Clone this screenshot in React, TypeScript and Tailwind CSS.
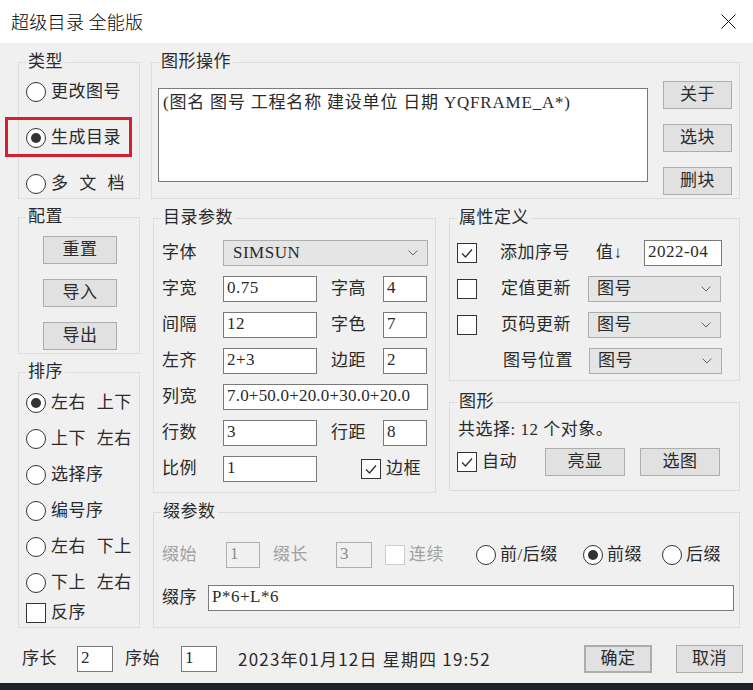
import React from "react";

const Radio = ({ checked = false }: { checked?: boolean }) => (
  <span className="w-[20px] h-[20px] shrink-0 rounded-full border border-[#333] bg-white flex items-center justify-center">
    {checked && <span className="w-[10px] h-[10px] rounded-full bg-[#333]" />}
  </span>
);

const Check = ({ checked = false, disabled = false }: { checked?: boolean; disabled?: boolean }) => (
  <span
    className={`w-[20px] h-[20px] shrink-0 bg-white flex items-center justify-center border ${
      disabled ? "border-[#cccccc]" : "border-[#333]"
    }`}
  >
    {checked && (
      <svg width="14" height="14" viewBox="0 0 14 14">
        <polyline points="2,7.5 5.5,11 12,3.5" fill="none" stroke="#333" strokeWidth="1.4" />
      </svg>
    )}
  </span>
);

const Btn = ({ label, className = "" }: { label: string; className?: string }) => (
  <div
    className={`h-[28px] shrink-0 flex items-center justify-center bg-[#e1e1e1] border border-[#adadad] text-[17px] ${className}`}
  >
    {label}
  </div>
);

const Input = ({ value, className = "" }: { value: string; className?: string }) => (
  <div
    className={`h-[26px] shrink-0 bg-white border border-[#7a7a7a] pl-[3px] text-[17px] leading-[22px] overflow-hidden whitespace-nowrap ${className}`}
  >
    {value}
  </div>
);

const Combo = ({ value, className = "" }: { value: string; className?: string }) => (
  <div
    className={`h-[26px] shrink-0 flex items-center justify-between bg-[#e5e5e5] border border-[#adadad] pl-[8px] pr-[9px] text-[17px] ${className}`}
  >
    <span>{value}</span>
    <svg width="10" height="6" viewBox="0 0 10 6">
      <polyline points="0.5,0.5 5,5 9.5,0.5" fill="none" stroke="#666" strokeWidth="1" />
    </svg>
  </div>
);

const Group = ({ title, className = "", children }: { title: string; className?: string; children: React.ReactNode }) => (
  <fieldset className={`min-w-0 shrink-0 border border-[#dcdcdc] ${className}`}>
    <legend className="ml-[7px] px-[2px] text-[17px] leading-[18px]">{title}</legend>
    {children}
  </fieldset>
);

export default function App() {
  return (
    <div className="w-[753px] h-[690px] flex flex-col bg-[#f0f0f0] text-[#2a2a2a] font-['Liberation_Serif','Noto_Sans_CJK_SC',serif] tracking-[0.5px] overflow-hidden">
      {/* title bar */}
      <div className="h-[43px] shrink-0 bg-white flex items-center justify-between pl-[11px] pr-[17px]">
        <span className="font-['Noto_Sans_CJK_SC',sans-serif] font-light text-[18px] tracking-[0.3px] text-black">
          超级目录 全能版
        </span>
        <svg width="15" height="15" viewBox="0 0 15 15">
          <path d="M0.5 0.5L14.5 14.5M14.5 0.5L0.5 14.5" stroke="#111" strokeWidth="1" />
        </svg>
      </div>

      <div className="flex-1 flex flex-col">
        <div className="flex gap-[11px] pl-[18px] pt-[10px]">
          {/* left column */}
          <div className="w-[122px] flex flex-col gap-[9px]">
            <Group title="类型" className="h-[146px]">
              <div className="flex flex-col gap-[26px] pl-[7px] pt-[11px]">
                <div className="flex items-center gap-[5px] h-[20px]">
                  <Radio />
                  <span className="text-[17px]">更改图号</span>
                </div>
                <div className="relative flex items-center gap-[5px] h-[20px]">
                  <Radio checked />
                  <span className="text-[17px]">生成目录</span>
                  <div className="absolute -left-[21px] -top-[11px] w-[127px] h-[40px] border-[3px] border-[#d3222f]" />
                </div>
                <div className="flex items-center gap-[5px] h-[20px]">
                  <Radio />
                  <span className="text-[17px] [word-spacing:6px]">多 文 档</span>
                </div>
              </div>
            </Group>

            <Group title="配置" className="h-[146px]">
              <div className="flex flex-col gap-[15px] pl-[24px] pt-[10px]">
                <Btn label="重置" className="w-[74px]" />
                <Btn label="导入" className="w-[74px]" />
                <Btn label="导出" className="w-[74px]" />
              </div>
            </Group>

            <Group title="排序" className="h-[265px]">
              <div className="flex flex-col pl-[7px] pt-[12px]">
                <div className="flex flex-col gap-[16px]">
                  {[
                    ["左右 上下", true],
                    ["上下 左右", false],
                    ["选择序", false],
                    ["编号序", false],
                    ["左右 下上", false],
                    ["下上 左右", false],
                  ].map(([t, c]) => (
                    <div key={t as string} className="flex items-center gap-[5px] h-[20px]">
                      <Radio checked={c as boolean} />
                      <span className="text-[17px] [word-spacing:6px]">{t as string}</span>
                    </div>
                  ))}
                </div>
                <div className="flex items-center gap-[5px] h-[20px] mt-[10px]">
                  <Check />
                  <span className="text-[17px]">反序</span>
                </div>
              </div>
            </Group>
          </div>

          {/* right column */}
          <div className="w-[589px] flex flex-col gap-[10px]">
            <Group title="图形操作" className="h-[146px]">
              <div className="flex items-start pl-[6px]">
                <div className="mt-[17px] w-[490px] h-[94px] bg-white border border-[#7a7a7a] pl-[4px] pt-[1px] text-[17px] tracking-[0.8px] whitespace-nowrap">
                  (图名 图号 工程名称 建设单位 日期 YQFRAME_A*)
                </div>
                <div className="ml-[15px] mt-[10px] flex flex-col gap-[15px]">
                  <Btn label="关于" className="w-[69px]" />
                  <Btn label="选块" className="w-[69px]" />
                  <Btn label="删块" className="w-[69px]" />
                </div>
              </div>
            </Group>

            <div className="flex gap-[13px] pl-[2px]">
              <Group title="目录参数" className="w-[283px] h-[284px]">
                <div className="flex flex-col gap-[10px] pl-[8px] pt-[13px] text-[17px]">
                  <div className="flex items-center h-[26px]">
                    <span className="w-[61px]">字体</span>
                    <Combo value="SIMSUN" className="w-[205px] pl-[9px]" />
                  </div>
                  <div className="flex items-center h-[26px]">
                    <span className="w-[61px]">字宽</span>
                    <Input value="0.75" className="w-[94px]" />
                    <span className="ml-[14px] w-[52px]">字高</span>
                    <Input value="4" className="w-[44px]" />
                  </div>
                  <div className="flex items-center h-[26px]">
                    <span className="w-[61px]">间隔</span>
                    <Input value="12" className="w-[94px]" />
                    <span className="ml-[14px] w-[52px]">字色</span>
                    <Input value="7" className="w-[44px]" />
                  </div>
                  <div className="flex items-center h-[26px]">
                    <span className="w-[61px]">左齐</span>
                    <Input value="2+3" className="w-[94px]" />
                    <span className="ml-[14px] w-[52px]">边距</span>
                    <Input value="2" className="w-[44px]" />
                  </div>
                  <div className="flex items-center h-[26px]">
                    <span className="w-[61px]">列宽</span>
                    <Input value="7.0+50.0+20.0+30.0+20.0" className="w-[205px] tracking-[0.2px]" />
                  </div>
                  <div className="flex items-center h-[26px]">
                    <span className="w-[61px]">行数</span>
                    <Input value="3" className="w-[94px]" />
                    <span className="ml-[14px] w-[52px]">行距</span>
                    <Input value="8" className="w-[44px]" />
                  </div>
                  <div className="flex items-center h-[26px]">
                    <span className="w-[61px]">比例</span>
                    <Input value="1" className="w-[94px]" />
                    <span className="ml-[44px]">
                      <Check checked />
                    </span>
                    <span className="ml-[5px]">边框</span>
                  </div>
                </div>
              </Group>

              <div className="w-[291px] flex flex-col gap-[12px]">
                <Group title="属性定义" className="h-[172px]">
                  <div className="flex flex-col gap-[10px] pl-[7px] pt-[13px] text-[17px]">
                    <div className="flex items-center h-[26px]">
                      <Check checked />
                      <span className="ml-[23px] w-[96px]">添加序号</span>
                      <span className="w-[48px]">值↓</span>
                      <Input value="2022-04" className="w-[78px]" />
                    </div>
                    <div className="flex items-center h-[26px]">
                      <Check />
                      <span className="ml-[24px] w-[87px]">定值更新</span>
                      <Combo value="图号" className="w-[133px]" />
                    </div>
                    <div className="flex items-center h-[26px]">
                      <Check />
                      <span className="ml-[24px] w-[87px]">页码更新</span>
                      <Combo value="图号" className="w-[133px]" />
                    </div>
                    <div className="flex items-center h-[26px]">
                      <span className="w-[20px]" />
                      <span className="ml-[26px] w-[86px]">图号位置</span>
                      <Combo value="图号" className="w-[133px]" />
                    </div>
                  </div>
                </Group>

                <Group title="图形" className="h-[98px]">
                  <div className="flex flex-col pl-[7px] pt-[9px] text-[17px]">
                    <div className="h-[20px] flex items-center pl-[1px]">共选择: 12 个对象。</div>
                    <div className="flex items-center h-[28px] mt-[8px]">
                      <Check checked />
                      <span className="ml-[5px]">自动</span>
                      <Btn label="亮显" className="ml-[28px] w-[80px]" />
                      <Btn label="选图" className="ml-[15px] w-[80px]" />
                    </div>
                  </div>
                </Group>
              </div>
            </div>

            <Group title="缀参数" className="ml-[2px] w-[587px] h-[125px]">
              <div className="flex flex-col gap-[17px] pl-[8px] pt-[21px] text-[17px]">
                <div className="flex items-center h-[26px]">
                  <span className="w-[64px] text-[#a0a0a0]">缀始</span>
                  <div className="w-[34px] h-[26px] border border-[#adadad] pl-[3px] leading-[22px] text-[#8a8a8a]">1</div>
                  <span className="ml-[13px] w-[63px] text-[#a0a0a0]">缀长</span>
                  <div className="w-[36px] h-[26px] border border-[#adadad] pl-[3px] leading-[22px] text-[#8a8a8a]">3</div>
                  <span className="ml-[13px]">
                    <Check disabled />
                  </span>
                  <span className="ml-[4px] w-[67px] text-[#a0a0a0]">连续</span>
                  <Radio />
                  <span className="ml-[4px] w-[83px]">前/后缀</span>
                  <Radio checked />
                  <span className="ml-[4px] w-[55px]">前缀</span>
                  <Radio />
                  <span className="ml-[4px]">后缀</span>
                </div>
                <div className="flex items-center h-[26px]">
                  <span className="w-[46px]">缀序</span>
                  <Input value="P*6+L*6" className="w-[526px]" />
                </div>
              </div>
            </Group>
          </div>
        </div>

        {/* bottom bar */}
        <div className="flex items-center h-[28px] mt-[17px] pl-[22px] pr-[10px] text-[17px]">
          <span className="w-[55px]">序长</span>
          <Input value="2" className="w-[36px]" />
          <span className="ml-[12px] w-[56px]">序始</span>
          <Input value="1" className="w-[36px]" />
          <span className="ml-[21px] font-['Noto_Sans_CJK_SC',sans-serif] tracking-[1.2px]">
            2023年01月12日 星期四 19:52
          </span>
          <Btn label="确定" className="ml-auto w-[68px] border-2 border-[#0078d7]" />
          <Btn label="取消" className="ml-[24px] w-[67px]" />
        </div>
      </div>

      <div className="h-[7px] shrink-0 bg-[#1e2227]" />
    </div>
  );
}
